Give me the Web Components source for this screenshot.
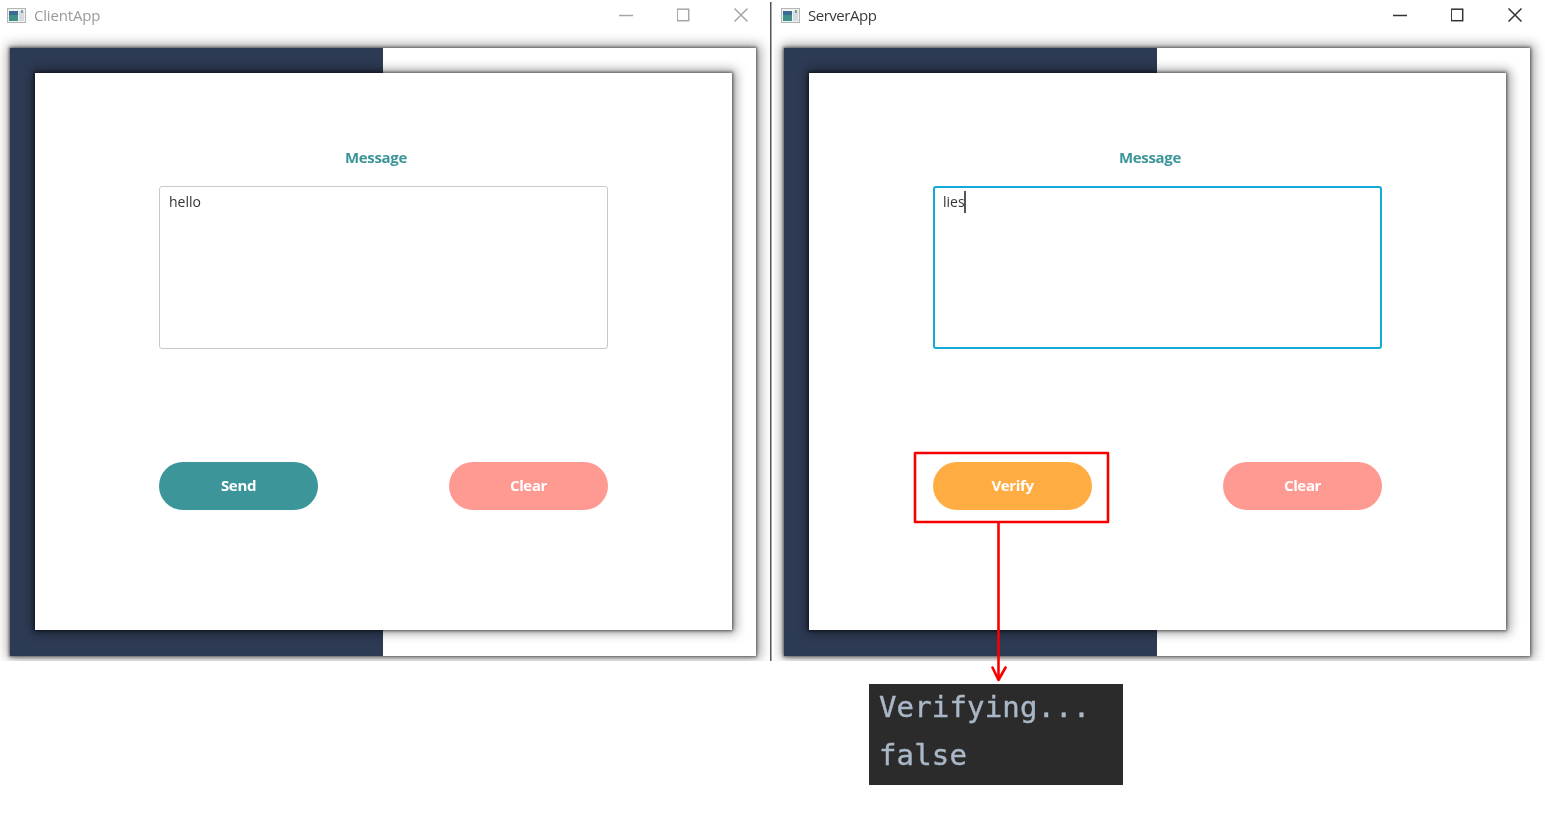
<!DOCTYPE html>
<html><head><meta charset="utf-8">
<style>
html,body{margin:0;padding:0;background:#fff;width:1545px;height:826px;overflow:hidden}
body{position:relative;font-family:"Open Sans","Noto Sans",sans-serif}
.row{display:flex;filter:blur(.3px)}
</style></head><body>
<div class="row">
  <app-window name="ClientApp" inactive>
    <form-card><text-box slot="box">hello</text-box>
      <pill-button slot="a" color="#3b9599">Send</pill-button>
      <pill-button slot="b" color="#ff9a92">Clear</pill-button></form-card>
  </app-window>
  <app-window name="ServerApp">
    <form-card><text-box slot="box" focused>lies</text-box>
      <pill-button slot="a" color="#ffad42">Verify</pill-button>
      <pill-button slot="b" color="#ff9a92">Clear</pill-button></form-card>
  </app-window>
</div>
<console-output>Verifying...
false</console-output>
<note-overlay></note-overlay>
<script>
function def(tag,html,extra){
  const t=document.createElement('template');t.innerHTML=html;
  customElements.define(tag,class extends HTMLElement{
    constructor(){super();this.attachShadow({mode:'open'}).appendChild(t.content.cloneNode(true));}
    connectedCallback(){extra&&extra(this)}
  });
}
def('app-window',`<style>
:host{display:block;flex:none;width:774px;height:661px;box-sizing:border-box;overflow:hidden}
.bar{height:48px;box-sizing:border-box;display:flex;align-items:flex-start;padding:7px 0 0 7px;position:relative}
svg.i{width:19px;height:17px;flex:none}
.t{font-size:15px;line-height:18px;margin-top:-1px;margin-left:8px;color:#3a3a3a;letter-spacing:-.48px}
.ctl{margin-left:auto;margin-right:26px;display:flex;gap:0;margin-top:1px}
.ctl svg{display:block;width:57.5px;height:14px;fill:none;stroke:#333;stroke-width:1.5}
:host([inactive]) .t{color:#9a9a9a;letter-spacing:-.18px}
:host([inactive]) .ctl svg{stroke:#a6a6a6}
.panel{margin:0 18px 0 10px;height:608px;box-sizing:border-box;padding:25px 24px 26px 25px;
 background:linear-gradient(to right,#2d3a53 0,#2d3a53 373px,#fff 373px);box-shadow:0 0 3px 1px rgba(0,0,0,.55),1px 0 11px 3px rgba(0,0,0,.38)}
</style>
<div class="bar">
 <svg class="i" viewBox="0 0 19 17"><rect x=".5" y="1.5" width="18" height="14" fill="#f1f1f1" stroke="#b5b5b5"/><rect x="2" y="4" width="9" height="10" fill="#3f8f8a"/><rect x="2" y="4" width="9" height="4" fill="#3d6a94"/><rect x="12" y="4" width="5" height="10" fill="#d5dbe0"/><rect x="14" y="3" width="2" height="3" fill="#7da0a0"/></svg>
 <span class="t"></span>
 <div class="ctl">
  <svg viewBox="0 0 57.5 14"><path d="M0 7.5H14"/></svg>
  <svg viewBox="0 0 57.5 14"><rect x=".2" y="1.2" width="11.5" height="11.5"/></svg>
  <svg viewBox="0 0 14 14" style="width:14px"><path d="M.5.5L13.5 13.5M13.5.5L.5 13.5"/></svg>
 </div>
</div>
<div class="panel"><slot></slot></div>`,el=>{el.shadowRoot.querySelector('.t').textContent=el.getAttribute('name')});

def('form-card',`<style>
:host{display:block;height:557px;box-sizing:border-box;background:#fff;box-shadow:0 0 3px 1px rgba(0,0,0,.55),1px 0 10px 3px rgba(0,0,0,.38);padding:73px 124px 0}
.m{font-size:15px;font-weight:700;color:#3b9599;line-height:22px;text-align:center;margin-right:15px;letter-spacing:-.35px;margin-bottom:18px}
.btns{display:flex;justify-content:space-between;margin-top:113px}
</style>
<div class="m">Message</div>
<slot name="box"></slot>
<div class="btns"><slot name="a"></slot><slot name="b"></slot></div>`);

def('text-box',`<style>
:host{display:block;height:163px;box-sizing:border-box;border:1px solid #c8c8c8;border-radius:3px;padding:5px 9px;font-size:14px;line-height:19px;color:#333;background:#fff;letter-spacing:0}
:host([focused]){border:2px solid #14a9d6;padding:3px 8px}
.c{display:none;width:1.5px;height:22px;background:#555;vertical-align:-6px;margin-left:-.5px}
:host([focused]) .c{display:inline-block}
</style><slot></slot><span class="c"></span>`);

def('pill-button',`<style>
:host{display:flex;align-items:center;justify-content:center;width:159px;height:48px;border-radius:24px;color:#fff;font-size:15px;font-weight:700;letter-spacing:-.35px;line-height:20px;padding-bottom:2px;box-sizing:border-box}
</style><slot></slot>`,el=>{el.style.background=el.getAttribute('color')});

def('console-output',`<style>
:host{display:flow-root;width:254px;height:101px;box-sizing:border-box;margin:23px 0 0 869px;background:#2b2b2b;color:#a9b7c6;font-family:"DejaVu Sans Mono","Liberation Mono",monospace;font-size:29px;line-height:48px;letter-spacing:.15px;white-space:pre;padding:0 0 0 10px;-webkit-text-stroke:.4px #a9b7c6;filter:blur(.4px)}
.w{display:block;margin-top:-1px}
</style><div class="w"><slot></slot></div>`);

def('note-overlay',`<style>
:host{position:absolute;left:0;top:0;width:1545px;height:826px;pointer-events:none}
svg{display:block}
</style>
<svg width="1545" height="826" viewBox="0 0 1545 826" fill="none">
 <rect x="770" y="2" width="1.5" height="659" fill="#555" stroke="none"/>
 <rect x="915" y="453" width="193" height="69" stroke="#f60000" stroke-width="2.6" stroke-linejoin="round"/>
 <path d="M998.5 522V679" stroke="#f60000" stroke-width="2.6"/>
 <path d="M992.5 667.5L998.5 680L1005.5 667.5" stroke="#f60000" stroke-width="2.6" stroke-linecap="round" stroke-linejoin="round"/>
</svg>`);
</script>
</body></html>
